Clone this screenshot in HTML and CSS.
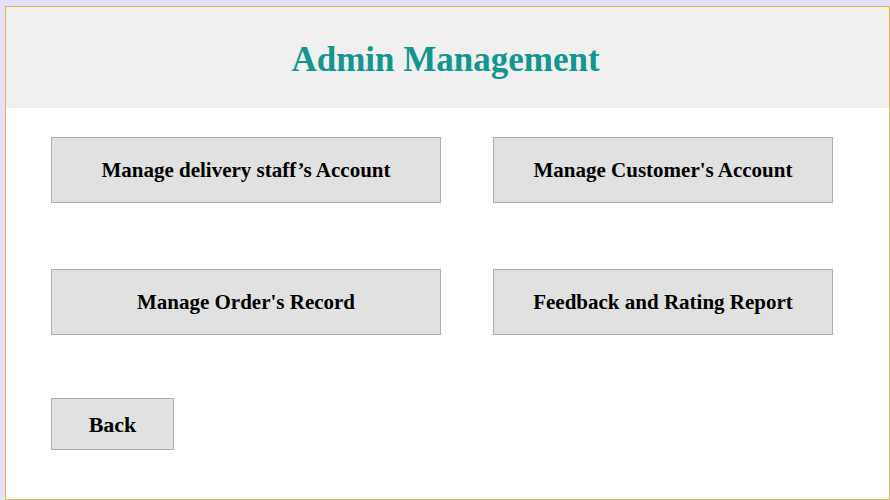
FILE: index.html
```html
<!DOCTYPE html>
<html>
<head>
<meta charset="utf-8">
<link rel="stylesheet" href="styles.css">
</head>
<body>
<div class="frame">
  <header class="header">
    <h1 class="title">Admin Management</h1>
  </header>
  <main class="content">
    <div class="grid">
      <button class="btn btn-wide">Manage delivery staff’s Account</button>
      <button class="btn btn-narrow">Manage Customer's Account</button>
      <button class="btn btn-wide">Manage Order's Record</button>
      <button class="btn btn-narrow">Feedback and Rating Report</button>
    </div>
    <button class="btn btn-back">Back</button>
  </main>
</div>
</body>
</html>
```

FILE: styles.css
```css
html, body {
  margin: 0;
  padding: 0;
}
body {
  background: #e4e2fb;
  padding: 6px 0 0 5px;
  width: 890px;
  height: 500px;
  box-sizing: border-box;
  overflow: hidden;
  font-family: "Liberation Serif", "Times New Roman", serif;
}
.frame {
  width: 885px;
  height: 494px;
  box-sizing: border-box;
  background: #ffffff;
  border: 1px solid #efb04a;
  border-bottom-color: #e2c04e;
  border-right-color: #e9b84c;
  display: flex;
  flex-direction: column;
}
.header {
  height: 101px;
  background: #f0f0f0;
  display: flex;
  align-items: center;
  justify-content: center;
}
.title {
  margin: 0;
  color: #13968f;
  font-size: 35px;
  font-weight: bold;
  line-height: 1;
  padding-top: 4px;
  padding-right: 4px;
}
.content {
  padding: 29px 0 0 45px;
  display: flex;
  flex-direction: column;
  align-items: flex-start;
}
.grid {
  display: grid;
  grid-template-columns: 390px 340px;
  grid-auto-rows: 66px;
  column-gap: 52px;
  row-gap: 66px;
}
.btn {
  margin: 0;
  padding: 0;
  background: #e1e1e1;
  border: 1px solid #adadad;
  font-family: "Liberation Serif", "Times New Roman", serif;
  font-weight: bold;
  font-size: 21px;
  color: #000;
  display: flex;
  align-items: center;
  justify-content: center;
  box-sizing: border-box;
}
.btn-back {
  margin-top: 63px;
  width: 123px;
  height: 52px;
  font-size: 22px;
  padding-top: 1px;
}
```
